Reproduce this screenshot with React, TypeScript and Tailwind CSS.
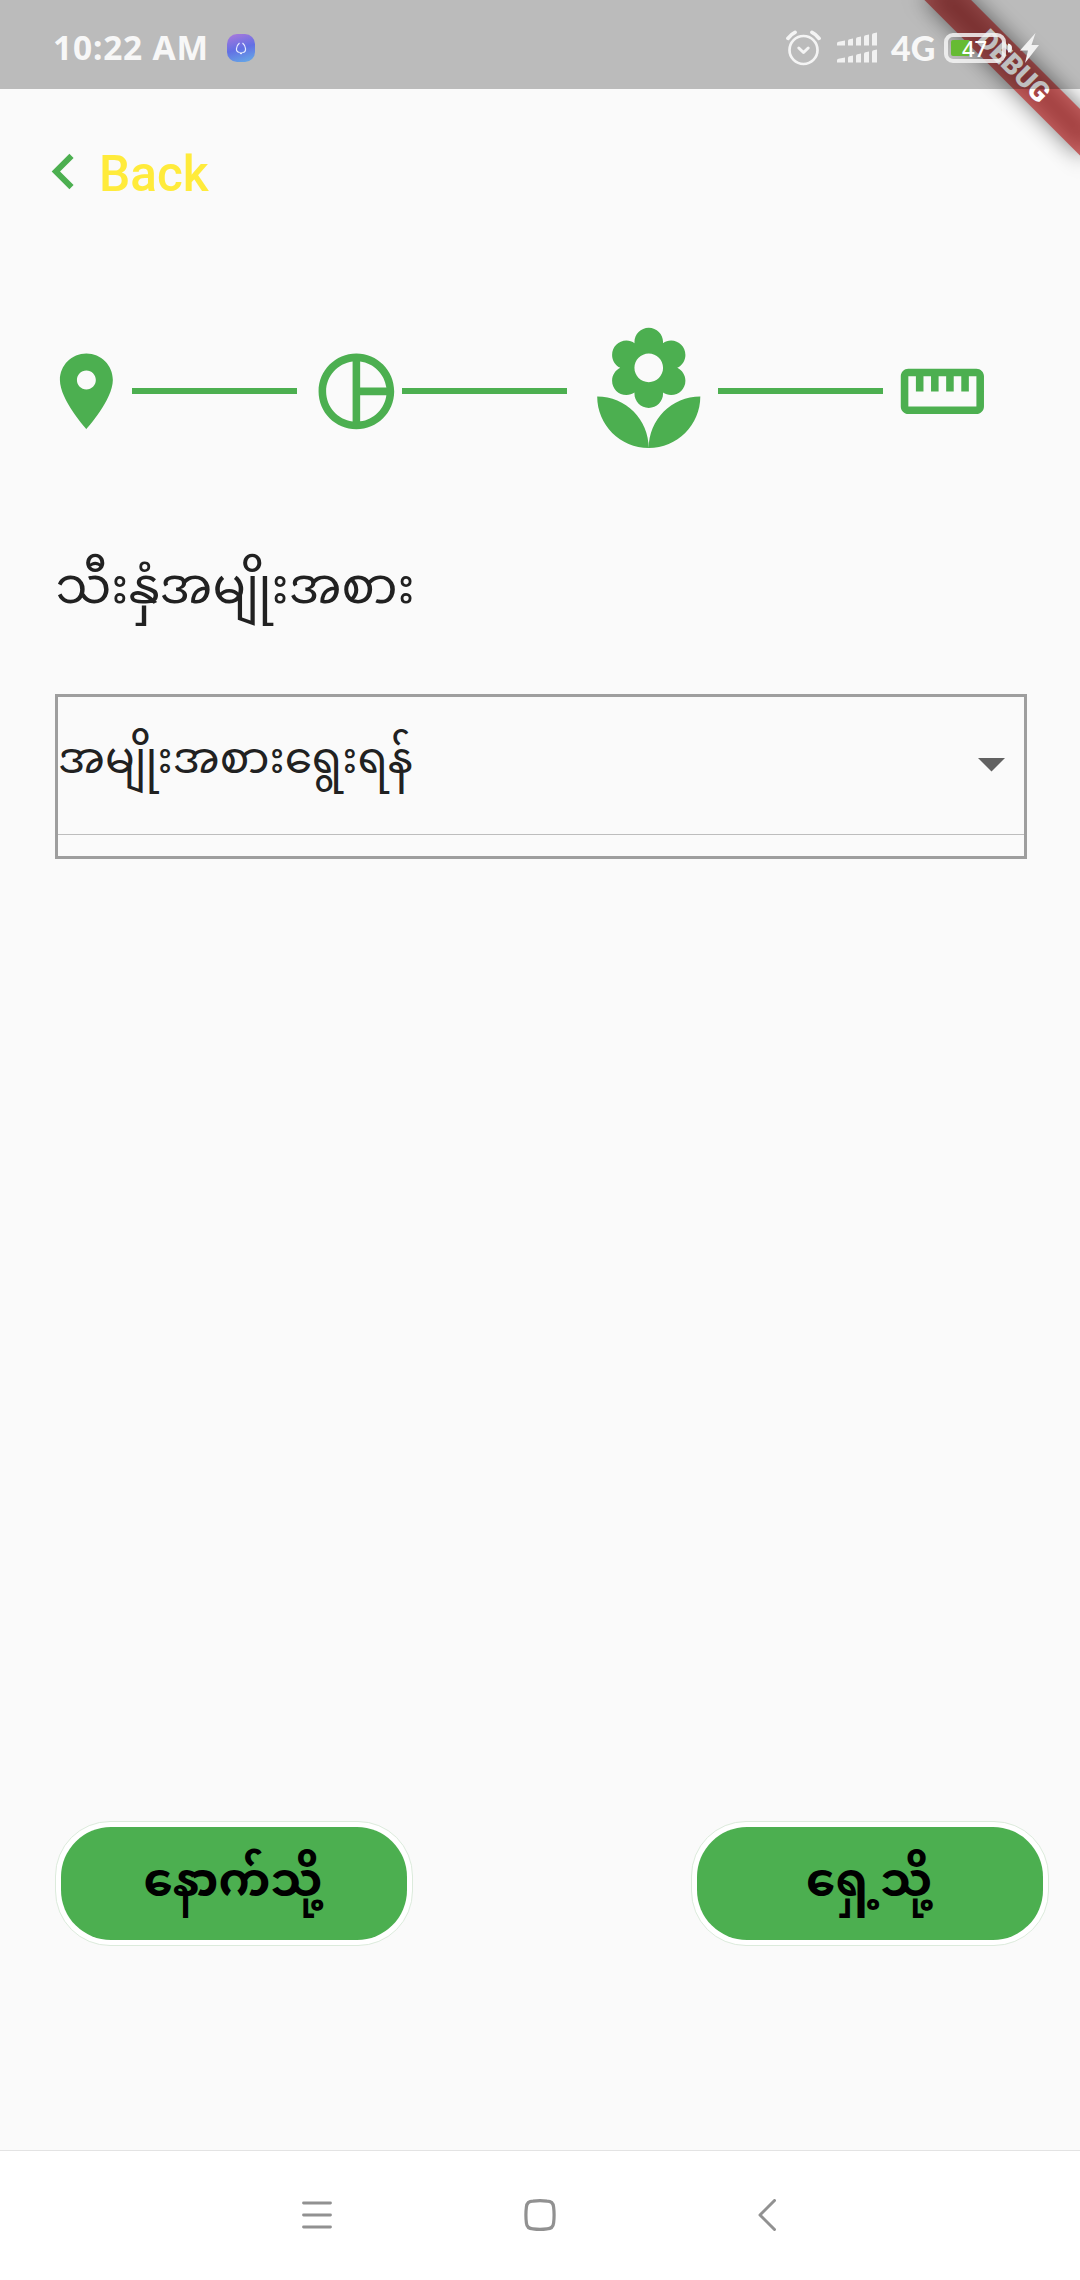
import React from "react";

const GREEN = "#4caf50";

function AlarmIcon() {
  return (
    <svg className="h-[36px] w-[36px]" viewBox="0 0 36 36" fill="none" stroke="#f4f4f4" strokeLinecap="round" strokeLinejoin="round">
      <circle cx="17.500" cy="20" r="14" strokeWidth="2.700" />
      <path d="M2 8.300Q5 4.300 9 2.400M33 8.300Q30 4.300 26 2.400" strokeWidth="3.800" />
      <path d="M12.800 18l4.700 4.500 4.700-4.500" strokeWidth="3" />
    </svg>
  );
}

function SignalIcon() {
  return (
    <svg className="h-[32px] w-[40px]" viewBox="0 0 40 32" fill="#f1f1f1">
      <path d="M0 11.500Q0 10 1.500 9.700L8 8.500V13.500H0zM11 9Q11 7.500 12.500 7.200L16 6.500V13.500H11zM19 7Q19 5.500 20.500 5.200L24 4.500V13.500H19zM27 5Q27 3.500 28.500 3.200L32 2.500V13.500H27zM35 3Q35 1.500 36.500 1.200L40 .5V13.500H35z" />
      <path d="M0 28.500Q0 27 1.500 26.700L8 25.500V30.500H0zM11 26Q11 24.500 12.500 24.200L16 23.500V30.500H11zM19 24Q19 22.500 20.500 22.200L24 21.500V30.500H19zM27 22Q27 20.500 28.500 20.200L32 19.500V30.500H27zM35 20Q35 18.500 36.500 18.200L40 17.500V30.500H35z" />
    </svg>
  );
}

function Battery() {
  return (
    <div className="relative flex h-[30px] w-[68px] items-center">
      <svg className="absolute inset-0 h-[30px] w-[68px]" viewBox="0 0 68 30" fill="none">
        <rect x="2" y="2" width="58" height="26" rx="7" stroke="#f4f4f4" strokeOpacity=".85" strokeWidth="4" />
        <path d="M9 7H25.500V23H9Q7 23 7 21V9Q7 7 9 7z" fill="#66bb33" />
        <path d="M64 10.500Q68 11 68 15T64 19.500z" fill="#f4f4f4" />
      </svg>
      <span className="relative w-[61px] text-center font-['Noto_Sans'] text-[22px] leading-[30px] font-medium text-white">47</span>
    </div>
  );
}

function StatusBar() {
  return (
    <header className="relative z-10 flex h-[89px] shrink-0 items-center justify-between bg-black/25 pt-[6px] pr-[41px] pl-[53px]">
      <div className="flex items-center">
        <span className="w-[174px] font-['Noto_Sans'] text-[33.500px] leading-none font-bold tracking-[0.8px] whitespace-nowrap text-[#f7f7f7]">10:22 AM</span>
        <svg className="h-[28px] w-[28px]" viewBox="0 0 28 28" fill="none">
          <defs>
            <linearGradient id="app" x1=".4" y1="0" x2=".7" y2="1">
              <stop offset="0" stopColor="#a077dd" />
              <stop offset=".5" stopColor="#6270e4" />
              <stop offset="1" stopColor="#65a5e6" />
            </linearGradient>
          </defs>
          <rect width="28" height="28" rx="10" fill="url(#app)" />
          <path d="M12.500 9Q10 11 9.500 14.500T12.500 18.500M15.500 9Q18 11 18.500 14.500T15.500 18.500" stroke="#e8ecff" strokeWidth="1.200" />
          <path d="M12 18.500h4L14 20.500z" fill="#fff" />
        </svg>
      </div>
      <div className="flex items-center">
        <AlarmIcon />
        <div className="ml-[15px] flex"><SignalIcon /></div>
        <span className="ml-[14px] w-[53px] font-['Lato'] text-[34px] leading-none font-black text-[#f7f7f7]">4G</span>
        <Battery />
        <svg className="ml-[8px] h-[30px] w-[19px]" viewBox="0 0 19 30" fill="#f1f1f1">
          <path d="M15.500 0L0 17.500H8L5 30 19 12H11.500z" />
        </svg>
      </div>
    </header>
  );
}

function DebugBanner() {
  return (
    <div className="absolute top-0 right-0 h-[200px] w-[200px] overflow-hidden">
      <div className="absolute top-0 left-[200px] h-0 w-0 rotate-45">
        <div className="absolute top-[77px] left-[-110px] h-[33px] w-[220px] bg-black/50 blur-[11px]" />
        <div className="absolute top-[77px] left-[-110px] flex h-[33px] w-[220px] items-center justify-center bg-[#b71c1c]/63 font-['Roboto'] text-[28px] leading-none font-black text-white">
          DEBUG
        </div>
      </div>
    </div>
  );
}

function Icon({ d, className }: { d: string; className: string }) {
  return (
    <svg className={className} viewBox="0 0 24 24" fill={GREEN}>
      <path d={d} />
    </svg>
  );
}

function Line() {
  return <div className="h-[6px] w-[165px] shrink-0 bg-[#4caf50]" />;
}

function Stepper() {
  const size = "h-[90.75px] w-[90.75px] shrink-0";
  return (
    <div className="flex h-[138px] items-center pl-[41.25px]">
      <Icon className={size} d="M12 2C8.130 2 5 5.130 5 9c0 5.250 7 13 7 13s7-7.750 7-13c0-3.870-3.130-7-7-7zm0 9.500c-1.380 0-2.500-1.120-2.500-2.500s1.120-2.500 2.500-2.500 2.500 1.120 2.500 2.500-1.120 2.500-2.500 2.500z" />
      <Line />
      <Icon className={`${size} ml-[13.75px]`} d="M12 2C6.480 2 2 6.480 2 12s4.480 10 10 10 10-4.480 10-10S17.520 2 12 2zm1 2.070c3.610.450 6.480 3.330 6.930 6.930H13V4.070zM4 12c0-4.060 3.070-7.440 7-7.930v15.870c-3.930-.500-7-3.880-7-7.940zm9 7.930V13h6.930c-.450 3.610-3.320 6.480-6.930 6.930z" />
      <Line />
      <Icon className="ml-[13.75px] h-[137.5px] w-[137.5px] shrink-0" d="M12 22c4.970 0 9-4.030 9-9-4.970 0-9 4.030-9 9zM5.600 10.250c0 1.380 1.120 2.500 2.500 2.500.530 0 1.010-.160 1.420-.440l-.020.190c0 1.380 1.120 2.500 2.500 2.500s2.500-1.120 2.500-2.500l-.020-.190c.400.280.890.440 1.420.440 1.380 0 2.500-1.120 2.500-2.500 0-1-.590-1.850-1.430-2.250.840-.400 1.430-1.250 1.430-2.250 0-1.380-1.120-2.500-2.500-2.500-.530 0-1.010.160-1.420.440l.020-.190C14.500 2.120 13.380 1 12 1S9.500 2.120 9.500 3.500l.020.190c-.400-.280-.890-.440-1.420-.440-1.380 0-2.500 1.120-2.500 2.500 0 1 .590 1.850 1.430 2.250-.840.400-1.430 1.250-1.430 2.250zM12 5.500c1.380 0 2.500 1.120 2.500 2.500s-1.120 2.500-2.500 2.500S9.500 9.380 9.500 8s1.120-2.500 2.500-2.500zM3 13c0 4.970 4.030 9 9 9 0-4.970-4.030-9-9-9z" />
      <Line />
      <Icon className={`${size} ml-[13.75px]`} d="M21 6H3c-1.100 0-2 .900-2 2v8c0 1.100.900 2 2 2h18c1.100 0 2-.900 2-2V8c0-1.100-.900-2-2-2zm0 10H3V8h2v4h2V8h2v4h2V8h2v4h2V8h2v4h2V8h2v8z" />
    </div>
  );
}

function PillButton({ children }: { children: React.ReactNode }) {
  return (
    <button className="flex h-[125px] w-[358px] items-center justify-center rounded-[55px] border border-[#dcebdc] bg-white p-[5px]">
      <span className="flex h-full w-full items-center justify-center rounded-[50px] bg-[#4caf50] pt-[4px] pr-[2px] text-[46.750px] font-bold text-black">{children}</span>
    </button>
  );
}

export default function App() {
  return (
    <div className="relative flex h-[2280px] w-[1080px] flex-col overflow-hidden bg-[#fafafa] font-['Noto_Sans_Myanmar','Noto_Sans',sans-serif]">
      <DebugBanner />
      <StatusBar />

      <div className="mt-[47px] flex h-[71px] items-center pl-[28px]">
        <Icon className="h-[71px] w-[71px]" d="M15.410 7.410L14 6l-6 6 6 6 1.410-1.410L10.830 12z" />
        <span className="pt-[7px] font-['Roboto'] text-[49.500px] leading-none font-medium text-[#ffeb3b]">Back</span>
      </div>

      <div className="mt-[115px]">
        <Stepper />
      </div>

      <h1 className="mt-[77px] h-[110px] pl-[55.5px] text-[49.500px] leading-[110px] font-normal whitespace-nowrap text-[#212121]">သီးနှံအမျိုးအစား</h1>

      <div className="mt-[47px] ml-[55px] h-[165px] w-[972px] border-[3px] border-[#9e9e9e]">
        <div className="flex h-[138px] items-center justify-between border-b border-[#bdbdbd] pr-[19px]">
          <span className="pb-[6px] text-[44px] leading-[100px] whitespace-nowrap text-[#212121]">အမျိုးအစားရွေးရန်</span>
          <svg className="mb-[2px] h-[14px] w-[27px]" viewBox="0 0 27 14" fill="#616161">
            <path d="M0 0H27L13.500 13.500z" />
          </svg>
        </div>
      </div>

      <div className="mt-[962px] flex justify-between pr-[31px] pl-[55px]">
        <PillButton>နောက်သို့</PillButton>
        <PillButton>ရှေ့သို့</PillButton>
      </div>

      <nav className="mt-auto flex h-[130px] items-center border-t border-[#e3e3e3] bg-white pb-[2px] pl-[302px]">
        <svg className="h-[32px] w-[30px]" viewBox="0 0 30 32" stroke="#919191" strokeWidth="2.800" strokeLinecap="round">
          <path d="M1.500 4H28.500M1.500 16H28.500M1.500 28H28.500" />
        </svg>
        <svg className="ml-[192px] h-[32px] w-[32px]" viewBox="0 0 32 32" fill="none" stroke="#919191" strokeWidth="3.200">
          <path d="M9 2.200Q16 1.200 23 2.200Q29 2.200 29.600 8Q30.600 16 29.600 24Q29 29.800 23 29.800Q16 30.800 9 29.800Q3 29.800 2.400 24Q1.400 16 2.400 8Q3 2.200 9 2.200z" />
        </svg>
        <svg className="ml-[202px] h-[32px] w-[18px]" viewBox="0 0 18 32" fill="none" stroke="#919191" strokeWidth="3" strokeLinecap="round" strokeLinejoin="round">
          <path d="M16.500 1.500L2 16 16.500 30.500" />
        </svg>
      </nav>
    </div>
  );
}
